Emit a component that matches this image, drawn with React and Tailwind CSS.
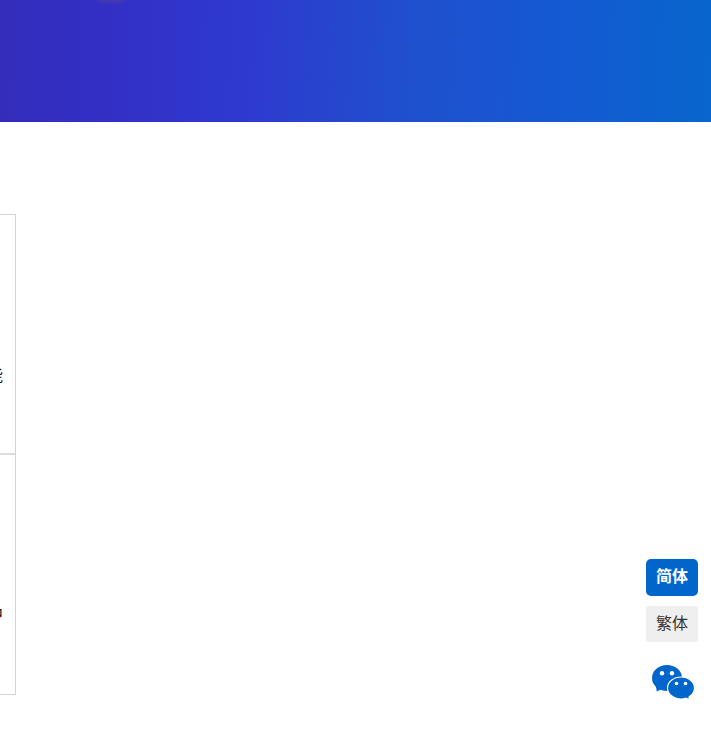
const font = { fontFamily: '"Liberation Sans", "Noto Sans CJK SC", sans-serif' };

function WeChat() {
  return (
    <svg width="44" height="36" viewBox="0 0 44 36" className="block">
      <ellipse cx="16" cy="13" rx="15" ry="13" fill="#0066cc" />
      <path fill="#0066cc" d="M4.500 19 L5.800 26.500 L13 23 Z" />
      <circle cx="11" cy="8.200" r="2.200" fill="#fff" />
      <circle cx="21" cy="8.200" r="2.200" fill="#fff" />
      <ellipse cx="30" cy="23" rx="13.500" ry="11" fill="#0066cc" stroke="#fff" strokeWidth="1.200" />
      <path fill="#0066cc" d="M33 31 L37.500 33.800 L37.500 29 Z" />
      <circle cx="25.500" cy="18.500" r="1.800" fill="#fff" />
      <circle cx="34.500" cy="18.500" r="1.800" fill="#fff" />
    </svg>
  );
}

export default function App() {
  return (
    <div style={font} className="relative h-[746px] w-[711px] overflow-hidden bg-white">
      <div className="relative h-[122px] overflow-hidden bg-[linear-gradient(92deg,#342dbb_0%,#332fc6_15%,#2e3acf_35%,#1f50ce_58%,#1559d2_78%,#0866cc_100%)]">
        <div className="absolute left-[98px] top-[-4px] h-[6px] w-[26px] rounded-full bg-[#4a3fa8] blur-[2px]" />
      </div>
      <div className="mt-[92px] flex w-[16px] flex-col overflow-hidden border border-l-0 border-[#d4d4d4]">
        <div className="flex h-[240px] items-center justify-end overflow-hidden border-b-2 border-[#dddddd] pt-[84px]">
          <span className="mr-[12px] shrink-0 text-[16px] leading-none text-[#111]">能</span>
        </div>
        <div className="flex h-[239px] items-center justify-end overflow-hidden pt-[81px]">
          <span className="mr-[12px] shrink-0 text-[16px] leading-none text-[#111]">中</span>
        </div>
      </div>
      <div className="absolute left-[646px] top-[559px] flex w-[52px] flex-col items-center">
        <div className="flex h-[37px] w-[52px] items-center justify-center rounded-[5px] bg-[#0066cc] pb-[2px] text-[16px] font-bold text-white">简体</div>
        <div className="mt-[10px] flex h-[36px] w-[52px] items-center justify-center rounded-[3px] bg-[#efefef] text-[16px] text-[#333]">繁体</div>
        <div className="mt-[23px] ml-[2px]"><WeChat /></div>
      </div>
    </div>
  );
}
